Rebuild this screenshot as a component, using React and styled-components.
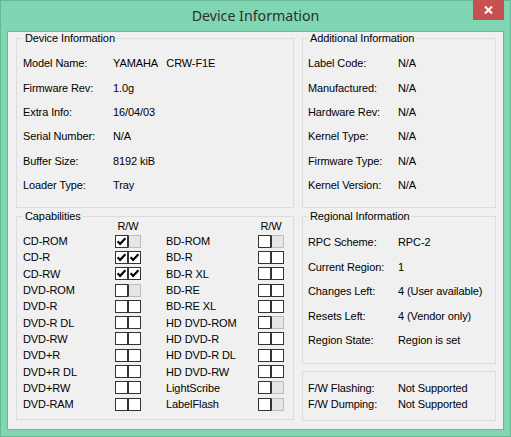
import React from "react";
import styled, { createGlobalStyle } from "styled-components";

const GlobalStyle = createGlobalStyle`
  body {
    margin: 0;
    font-family: "Liberation Sans", Arial, sans-serif;
  }
`;

const Window = styled.div`
  width: 511px;
  height: 437px;
  box-sizing: border-box;
  border: 1px solid #66b995;
  background: #80d6b3;
  display: flex;
  flex-direction: column;
`;

const TitleBar = styled.div`
  height: 30px;
  display: grid;
  grid-template-columns: 1fr auto 1fr;
  align-items: start;
`;

const Title = styled.div`
  grid-column: 2;
  font-family: "Segoe UI", "Noto Sans", sans-serif;
  font-size: 14.2px;
  line-height: 30px;
  color: #2e2e2e;
`;

const CloseButton = styled.div`
  grid-column: 3;
  justify-self: end;
  width: 31px;
  height: 20px;
  margin: -1px 6px 0 0;
  background: #c75050;
  display: flex;
  align-items: center;
  justify-content: center;
`;

const Client = styled.div`
  flex: 1;
  margin: 0 6px 6px;
  border: 1px solid #6ab897;
  background: #f0f0f0;
  padding: 0 7px 0 8px;
  display: flex;
  gap: 8px;
  font-size: 11px;
  letter-spacing: -0.1px;
  color: #000;
`;

const Column = styled.div`
  width: ${(p) => p.$width}px;
  display: flex;
  flex-direction: column;
`;

const Group = styled.fieldset`
  margin: ${(p) => p.$top || 0}px 0 0;
  padding: 0;
  height: ${(p) => p.$height}px;
  box-sizing: border-box;
  border: 1px solid #dcdcdc;
  min-width: 0;
`;

const Legend = styled.legend`
  margin-left: ${(p) => p.$offset || 6}px;
  padding: 0 2px;
  line-height: 13px;
  font-size: 11px;
`;

const InfoGrid = styled.div`
  display: grid;
  grid-template-columns: 90px 1fr;
  grid-auto-rows: ${(p) => p.$row}px;
  align-items: center;
  padding: ${(p) => p.$pad}px 0 0 ${(p) => p.$left}px;
  white-space: pre;
`;

const CapGrid = styled.div`
  display: grid;
  grid-template-columns: 92px 26px 25px 92px 26px;
  grid-template-rows: 15px;
  grid-auto-rows: 16.3px;
  align-items: center;
  margin-top: -5px;
  padding-left: 6px;
`;

const RW = styled.div`
  grid-column: ${(p) => p.$col};
  text-align: center;
`;

const Pair = styled.div`
  display: flex;
  height: 13px;
`;

const Box = styled.span`
  width: 13px;
  height: 13px;
  box-sizing: border-box;
  border: 1px solid ${(p) => (p.$disabled ? "#bcbcbc" : "#333")};
  border-left-color: #333;
  background: ${(p) => (p.$disabled ? "#e6e6e6" : "#fff")};
  display: flex;
`;

const Check = () => (
  <svg width="11" height="11" viewBox="0 0 11 11">
    <path d="M1.6 5.2 L4.1 7.9 L9.4 2.2" fill="none" stroke="#000" strokeWidth="2.2" />
  </svg>
);

const CheckBox = ({ on, disabled }) => (
  <Box $disabled={disabled}>{on && <Check />}</Box>
);

const deviceInfo = [
  ["Model Name:", "YAMAHA   CRW-F1E"],
  ["Firmware Rev:", "1.0g"],
  ["Extra Info:", "16/04/03"],
  ["Serial Number:", "N/A"],
  ["Buffer Size:", "8192 kiB"],
  ["Loader Type:", "Tray"],
];

const additionalInfo = [
  ["Label Code:", "N/A"],
  ["Manufactured:", "N/A"],
  ["Hardware Rev:", "N/A"],
  ["Kernel Type:", "N/A"],
  ["Firmware Type:", "N/A"],
  ["Kernel Version:", "N/A"],
];

const regionalInfo = [
  ["RPC Scheme:", "RPC-2"],
  ["Current Region:", "1"],
  ["Changes Left:", "4 (User available)"],
  ["Resets Left:", "4 (Vendor only)"],
  ["Region State:", "Region is set"],
];

const firmwareInfo = [
  ["F/W Flashing:", "Not Supported"],
  ["F/W Dumping:", "Not Supported"],
];

// [name, read, write, writeDisabled]
const leftCaps = [
  ["CD-ROM", true, false, true],
  ["CD-R", true, true],
  ["CD-RW", true, true],
  ["DVD-ROM", false, false, true],
  ["DVD-R"],
  ["DVD-R DL"],
  ["DVD-RW"],
  ["DVD+R"],
  ["DVD+R DL"],
  ["DVD+RW"],
  ["DVD-RAM"],
];

const rightCaps = [
  ["BD-ROM", false, false, true],
  ["BD-R"],
  ["BD-R XL"],
  ["BD-RE"],
  ["BD-RE XL"],
  ["HD DVD-ROM", false, false, true],
  ["HD DVD-R"],
  ["HD DVD-R DL"],
  ["HD DVD-RW"],
  ["LightScribe", false, false, true],
  ["LabelFlash", false, false, true],
];

const InfoRows = ({ rows }) =>
  rows.map(([label, value]) => (
    <React.Fragment key={label}>
      <span>{label}</span>
      <span>{value}</span>
    </React.Fragment>
  ));

const CapCells = ({ cap, col }) => (
  <>
    <span style={{ gridColumn: col }}>{cap[0]}</span>
    <Pair>
      <CheckBox on={cap[1]} />
      <CheckBox on={cap[2]} disabled={cap[3]} />
    </Pair>
  </>
);

export default function App() {
  return (
    <>
      <GlobalStyle />
      <Window>
        <TitleBar>
          <Title>Device Information</Title>
          <CloseButton>
            <svg width="9" height="8" viewBox="0 0 9 8">
              <path d="M1 0.5 L8 7.5 M8 0.5 L1 7.5" stroke="#fff" strokeWidth="2" />
            </svg>
          </CloseButton>
        </TitleBar>
        <Client>
          <Column $width={278}>
            <Group $height={176}>
              <Legend>Device Information</Legend>
              <InfoGrid $row={24.4} $pad={6} $left={6}>
                <InfoRows rows={deviceInfo} />
              </InfoGrid>
            </Group>
            <Group $top={2} $height={210}>
              <Legend>Capabilities</Legend>
              <CapGrid>
                <RW $col={2}>R/W</RW>
                <RW $col={5}>R/W</RW>
                {leftCaps.map((cap, i) => (
                  <React.Fragment key={cap[0]}>
                    <CapCells cap={cap} col={1} />
                    <CapCells cap={rightCaps[i]} col={4} />
                  </React.Fragment>
                ))}
              </CapGrid>
            </Group>
          </Column>
          <Column $width={194}>
            <Group $height={176}>
              <Legend $offset={5}>Additional Information</Legend>
              <InfoGrid $row={24.4} $pad={6} $left={5}>
                <InfoRows rows={additionalInfo} />
              </InfoGrid>
            </Group>
            <Group $top={2} $height={154}>
              <Legend $offset={5}>Regional Information</Legend>
              <InfoGrid $row={24.5} $pad={7} $left={5}>
                <InfoRows rows={regionalInfo} />
              </InfoGrid>
            </Group>
            <Group $top={7} $height={50}>
              <InfoGrid $row={16} $pad={8} $left={5}>
                <InfoRows rows={firmwareInfo} />
              </InfoGrid>
            </Group>
          </Column>
        </Client>
      </Window>
    </>
  );
}
